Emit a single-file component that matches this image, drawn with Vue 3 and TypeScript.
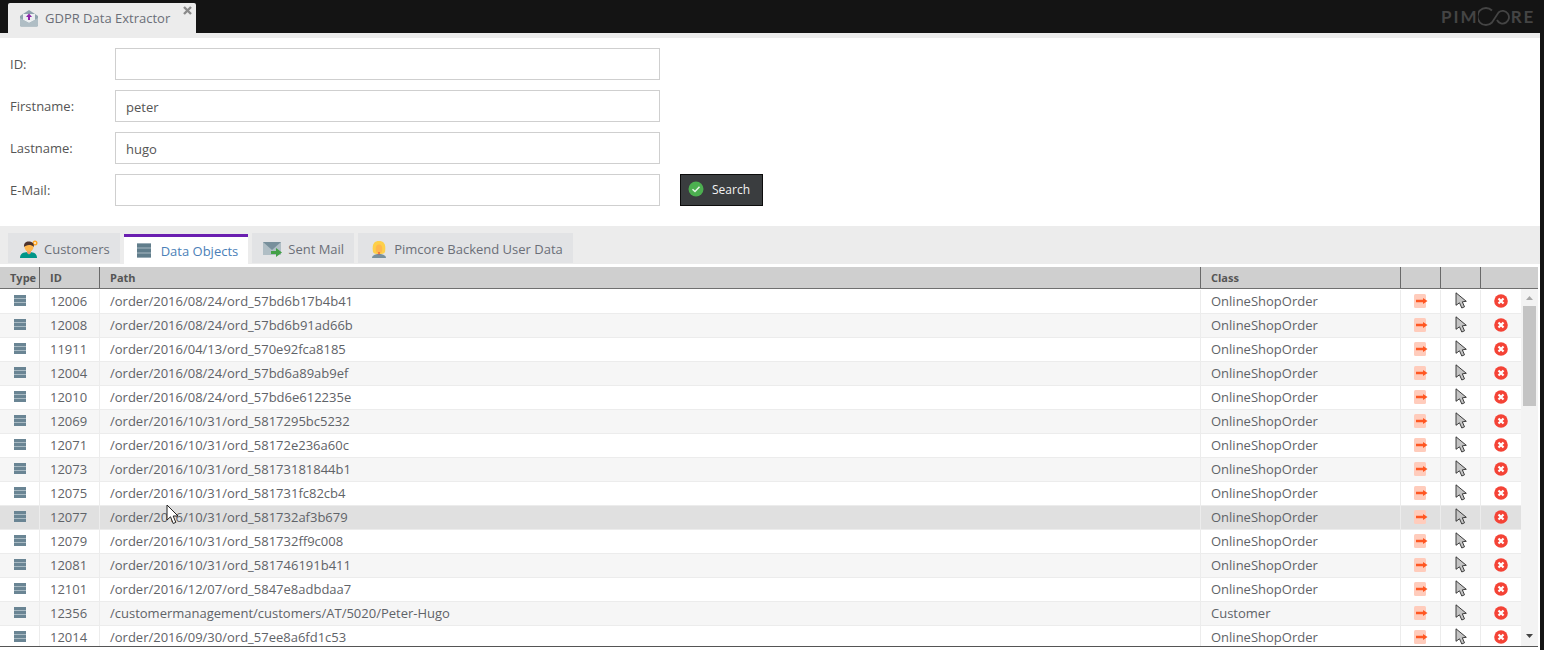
<script setup lang="ts">
interface Row { id: string; path: string; cls: string; hover?: boolean }
const o = 'OnlineShopOrder'
const rows: Row[] = [
  { id: '12006', path: '/order/2016/08/24/ord_57bd6b17b4b41', cls: o },
  { id: '12008', path: '/order/2016/08/24/ord_57bd6b91ad66b', cls: o },
  { id: '11911', path: '/order/2016/04/13/ord_570e92fca8185', cls: o },
  { id: '12004', path: '/order/2016/08/24/ord_57bd6a89ab9ef', cls: o },
  { id: '12010', path: '/order/2016/08/24/ord_57bd6e612235e', cls: o },
  { id: '12069', path: '/order/2016/10/31/ord_5817295bc5232', cls: o },
  { id: '12071', path: '/order/2016/10/31/ord_58172e236a60c', cls: o },
  { id: '12073', path: '/order/2016/10/31/ord_58173181844b1', cls: o },
  { id: '12075', path: '/order/2016/10/31/ord_581731fc82cb4', cls: o },
  { id: '12077', path: '/order/2016/10/31/ord_581732af3b679', cls: o, hover: true },
  { id: '12079', path: '/order/2016/10/31/ord_581732ff9c008', cls: o },
  { id: '12081', path: '/order/2016/10/31/ord_581746191b411', cls: o },
  { id: '12101', path: '/order/2016/12/07/ord_5847e8adbdaa7', cls: o },
  { id: '12356', path: '/customermanagement/customers/AT/5020/Peter-Hugo', cls: 'Customer' },
  { id: '12014', path: '/order/2016/09/30/ord_57ee8a6fd1c53', cls: o },
]
const fields = [
  { label: 'ID:', value: '' },
  { label: 'Firstname:', value: 'peter' },
  { label: 'Lastname:', value: 'hugo' },
  { label: 'E-Mail:', value: '' },
]
</script>

<template>
  <div class="page">
    <header class="topbar">
      <div class="maintab">
        <svg class="mt-icon" width="20" height="18" viewBox="0 0 20 18">
          <path d="M1 7 L10 1 L19 7 V16 a1.5 1.5 0 0 1 -1.5 1.5 H2.500 A1.500 1.500 0 0 1 1 16 Z" fill="#90a4ae" />
          <path d="M4 5 H16 V11 L10 14 L4 11 Z" fill="#eceff1" />
          <path d="M1 9 L10 14 L19 9 V16 a1.500 1.500 0 0 1 -1.500 1.500 H2.500 A1.500 1.500 0 0 1 1 16 Z" fill="#b0bec5" />
          <path d="M10 4.500 L13 8 H11 V11 H9 V8 H7 Z" fill="#8e24aa" />
        </svg>
        <span>GDPR Data Extractor</span>
        <svg class="mt-close" width="9" height="9" viewBox="0 0 9 9">
          <path d="M1 1 L8 8 M8 1 L1 8" stroke="#8a8a8a" stroke-width="2.400" />
        </svg>
      </div>
      <div class="logo">
        <span>PIM</span>
        <svg width="32" height="19" viewBox="0 0 32 19">
          <path d="M14 3.500 A8.500 8.500 0 1 0 14 15.500 L20.500 5.500 A6.300 6.300 0 1 1 19 13" fill="none" stroke="#444" stroke-width="1.800" />
        </svg>
        <span>RE</span>
      </div>
    </header>
    <div class="strip"></div>

    <main class="content">
      <section class="form">
        <div v-for="f in fields" :key="f.label" class="frow">
          <label>{{ f.label }}</label>
          <input type="text" :value="f.value" />
          <button v-if="f.label === 'E-Mail:'" class="search" type="button">
            <svg width="16" height="16" viewBox="0 0 16 16">
              <circle cx="8" cy="8" r="7.500" fill="#4caf50" />
              <path d="M4.500 8.200 L7 10.500 L11.500 5.800" fill="none" stroke="#e8f5e9" stroke-width="1.500" />
            </svg>
            <span>Search</span>
          </button>
        </div>
      </section>

      <nav class="tabs">
        <div class="tab">
          <svg width="20" height="20" viewBox="0 0 20 20">
            <circle cx="16" cy="4" r="2.500" fill="#ffa726" />
            <circle cx="16" cy="4" r="1" fill="#fff3e0" />
            <path d="M1 19 C1 14 5 13 10 13 C14 13 18 14 18 19 Z" fill="#009688" />
            <path d="M8 11 h4 v3 l-2 1.500 l-2 -1.500 Z" fill="#ef9a6a" />
            <circle cx="10" cy="8" r="4.500" fill="#ffb74d" />
            <path d="M5 8 C4.500 3 8 2 11 2.500 C14 3 15 5 15 8 C13.500 6.500 12 6 10 6 C8 6.500 6 6.500 5 8 Z" fill="#4e342e" />
          </svg>
          <span>Customers</span>
        </div>
        <div class="tab active">
          <svg width="16" height="15" viewBox="0 0 16 15" class="db">
            <rect x="1" y="0.500" width="14" height="14" fill="#a9bac3" />
            <rect x="1" y="0.500" width="14" height="4" fill="#607d8b" />
            <rect x="1" y="5.500" width="14" height="4" fill="#607d8b" />
            <rect x="1" y="10.500" width="14" height="4" fill="#607d8b" />
          </svg>
          <span>Data Objects</span>
        </div>
        <div class="tab">
          <svg width="20" height="18" viewBox="0 0 20 18">
            <rect x="0" y="2" width="18" height="13" fill="#b0bec5" />
            <path d="M0 2 H18 L9 10 Z" fill="#78909c" />
            <path d="M8 11 H13 V8 L19 12.500 L13 17 V14 H8 Z" fill="#43a047" />
          </svg>
          <span>Sent Mail</span>
        </div>
        <div class="tab">
          <svg width="20" height="20" viewBox="0 0 20 20">
            <path d="M3 19 C3 16 7 15 10 15 C13 15 17 16 17 19 Z" fill="#78909c" />
            <path d="M4 13 C2.500 4 6 2 10 2 C14 2 17.500 4 16 13 C15 15 13 15 10 15 C7 15 5 15 4 13 Z" fill="#fdd04a" />
            <ellipse cx="10" cy="10" rx="3.300" ry="4.500" fill="#ffb74d" />
            <rect x="9.500" y="13" width="1" height="2.500" fill="#e53935" />
          </svg>
          <span>Pimcore Backend User Data</span>
        </div>
      </nav>

      <section class="grid">
        <div class="ghead">
          <div class="hc c-type">Type</div>
          <div class="hc c-id">ID</div>
          <div class="hc c-path">Path</div>
          <div class="hc c-class">Class</div>
          <div class="hc c-act"></div>
          <div class="hc c-act"></div>
          <div class="hc c-last"></div>
        </div>
        <div class="gbody">
          <div class="rows">
            <div v-for="(r, i) in rows" :key="r.id" class="row" :class="{ alt: i % 2 === 1, hover: r.hover }">
              <div class="cell c-type ic">
                <svg width="12" height="11" viewBox="0 0 12 11">
                  <rect width="12" height="11" fill="#a9bac3" />
                  <rect y="0" width="12" height="3" fill="#6a8594" />
                  <rect y="4" width="12" height="3" fill="#6a8594" />
                  <rect y="8" width="12" height="3" fill="#6a8594" />
                </svg>
              </div>
              <div class="cell c-id">{{ r.id }}</div>
              <div class="cell c-path">{{ r.path }}</div>
              <div class="cell c-class">{{ r.cls }}</div>
              <div class="cell c-act ic">
                <svg width="14" height="14" viewBox="0 0 14 14">
                  <rect x="0" y="0" width="12" height="14" rx="1.500" fill="#ffccbc" />
                  <path d="M2 5.800 H9 V4 L13.500 7 L9 10 V8.200 H2 Z" fill="#ff5722" />
                </svg>
              </div>
              <div class="cell c-act ic">
                <svg width="12" height="17" viewBox="0 0 12 17">
                  <path d="M1 0.800 L1 13.300 L4.500 10.800 L6.800 16 L9.500 14.800 L7.300 9.800 L11.300 9.300 Z" fill="#c4c4c4" stroke="#2a2a2a" stroke-width="0.900" />
                </svg>
              </div>
              <div class="cell c-del ic">
                <svg width="14" height="14" viewBox="0 0 14 14">
                  <circle cx="7" cy="7" r="6.800" fill="#f44336" />
                  <path d="M4.500 4.500 L9.500 9.500 M9.500 4.500 L4.500 9.500" stroke="#fff" stroke-width="2.200" />
                </svg>
              </div>
            </div>
          </div>
          <div class="scrollbar">
            <svg class="arrow" width="7" height="4" viewBox="0 0 7 4"><path d="M0 4 L3.500 0 L7 4 Z" fill="#a8a8a8" /></svg>
            <div class="thumb"></div>
            <svg class="arrow down" width="7" height="4" viewBox="0 0 7 4"><path d="M0 0 L3.500 4 L7 0 Z" fill="#444" /></svg>
          </div>
        </div>
      </section>
    </main>

    <svg class="cursor" width="14" height="21" viewBox="0 0 14 21">
      <path d="M1 1 L1 16 L4.500 12.800 L7.200 19.500 L9.800 18.400 L7.200 12 L12 12 Z" fill="#fff" stroke="#222" stroke-width="1" />
    </svg>
  </div>
</template>

<style>
html, body { margin: 0; background: #141414; overflow: hidden; }
</style>

<style scoped>
.page {
  position: relative;
  width: 1544px;
  height: 650px;
  overflow: hidden;
  background: #141414;
  font-family: "Open Sans", "Liberation Sans", sans-serif;
  font-size: 13px;
  color: #5a5a5a;
}
.topbar {
  height: 33px;
  display: flex;
  justify-content: space-between;
  align-items: flex-end;
  padding-left: 8px;
  box-sizing: border-box;
}
.maintab {
  position: relative;
  width: 188px;
  height: 30px;
  box-sizing: border-box;
  padding-left: 11px;
  display: flex;
  align-items: center;
  gap: 6px;
  background: #ececec;
  color: #6b6f78;
  border-radius: 2px 2px 0 0;
}
.mt-close { position: absolute; right: 4px; top: 3px; }
.logo {
  width: 103px;
  height: 33px;
  display: flex;
  align-items: center;
  padding-bottom: 1px;
  box-sizing: border-box;
  color: #444;
  font-family: "Lato", sans-serif;
  font-weight: 700;
  font-size: 17px;
  letter-spacing: 2px;
}
.logo svg { margin-left: -1px; margin-right: 1px; }
.strip { height: 5px; width: 1540px; background: #ececec; }
.content { width: 1540px; height: 612px; background: #fff; overflow: hidden; }
.form { height: 188px; box-sizing: border-box; padding-top: 10px; display: flex; flex-direction: column; gap: 10px; }
.frow { display: flex; align-items: center; height: 32px; padding-left: 10px; }
.frow label { width: 105px; color: #555; font-size: 13px; }
.frow input {
  width: 545px;
  height: 32px;
  box-sizing: border-box;
  border: 1px solid #cfcfcf;
  padding: 2px 10px 0;
  font: inherit;
  color: #555;
  background: #fff;
  outline: none;
}
.search {
  margin-left: 20px;
  width: 83px;
  height: 32px;
  display: flex;
  align-items: center;
  gap: 8px;
  padding: 0 0 2px 7px;
  box-sizing: border-box;
  background: #3a3d3f;
  border: 1px solid #0c0c0c;
  color: #f2f2f2;
  font: inherit;
  font-size: 12px;
}
.tabs {
  height: 38px;
  box-sizing: border-box;
  background: #ececec;
  padding: 7px 0 0 8px;
  display: flex;
  gap: 4px;
  align-items: flex-start;
}
.tab {
  height: 30px;
  box-sizing: border-box;
  padding: 2px 10px 0 11px;
  display: flex;
  align-items: center;
  gap: 5px;
  background: #e2e3e5;
  color: #6b6f78;
}
.tab.active {
  margin-top: 1px;
  background: #fff;
  color: #4b7fb8;
  border-top: 3px solid #6a1fb0;
  padding: 0 10px 0 12px;
  gap: 9px;
}
.grid { padding-top: 3px; width: 1538px; }
.ghead {
  height: 21px;
  display: flex;
  background: #cfcfcf;
  border-bottom: 1px solid #707070;
  font-size: 11px;
  font-weight: 700;
  color: #555;
}
.hc { box-sizing: border-box; line-height: 22px; padding-left: 10px; border-right: 1px solid #6a6a6a; }
.hc.c-last { border-right: 0; flex: 1; }
.c-type { width: 40px; }
.c-id { width: 60px; }
.c-path { width: 1101px; }
.c-class { width: 200px; }
.c-act { width: 40px; }
.c-del { width: 40px; }
.gbody { display: flex; height: 357px; border-bottom: 1px solid #555; }
.rows { width: 1521px; overflow: hidden; }
.row { display: flex; height: 24px; box-sizing: border-box; background: #fff; border-top: 1px solid #ececec; }
.row:first-child { border-top-color: #fff; }
.row.alt { background: #f6f6f6; }
.row.hover { background: #e0e0e0; }
.cell {
  box-sizing: border-box;
  line-height: 23px;
  padding-left: 10px;
  border-right: 1px solid #ececec;
  white-space: nowrap;
  color: #5f6368;
}
.row .c-del { border-right: 0; }
.cell.ic { padding: 0 0 2px; display: flex; align-items: center; justify-content: center; }
.scrollbar {
  position: relative;
  width: 17px;
  background: #f3f3f3;
}
.thumb { position: absolute; left: 2px; top: 17px; width: 13px; height: 100px; background: #c4c4c4; }
.arrow { position: absolute; left: 5px; top: 7px; }
.arrow.down { top: auto; bottom: 8px; }
.cursor { position: absolute; left: 166px; top: 504px; }
</style>
